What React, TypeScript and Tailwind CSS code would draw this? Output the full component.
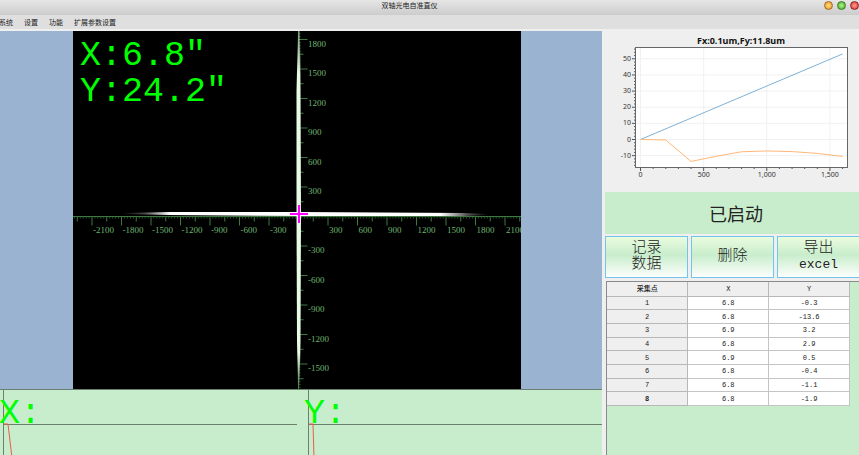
import React from "react";

const MENU = ["系统", "设置", "功能", "扩展参数设置"];

const ROWS: [number, string, string][] = [
  [1, "6.8", "-0.3"],
  [2, "6.8", "-13.6"],
  [3, "6.9", "3.2"],
  [4, "6.8", "2.9"],
  [5, "6.9", "0.5"],
  [6, "6.8", "-0.4"],
  [7, "6.8", "-1.1"],
  [8, "6.8", "-1.9"],
];

const range = (from: number, to: number) =>
  Array.from({ length: to - from + 1 }, (_, i) => from + i);

const READOUT = "font-['Liberation_Mono',monospace] text-[35px] leading-[36px] text-[#00ff00]";

/* Scope geometry: one label step is 300 arc seconds. */
const CX = 225.5;
const CY = 185.5;
const STEP = 29.5;

function tickLength(i: number) {
  if (i % 10 === 0) return 9;
  if (i % 5 === 0) return 5;
  return 2;
}

function Scope() {
  return (
    <svg width="448" height="358" className="block bg-black" role="img" aria-label="光斑图像">
      <defs>
        <linearGradient id="beamH" gradientUnits="userSpaceOnUse" x1="50" y1="0" x2="415" y2="0">
          <stop offset="0" stopColor="#fff" stopOpacity="0" />
          <stop offset="0.06" stopColor="#fff" stopOpacity="0.3" />
          <stop offset="0.13" stopColor="#fff" />
          <stop offset="0.87" stopColor="#fff" />
          <stop offset="0.94" stopColor="#fff" stopOpacity="0.35" />
          <stop offset="1" stopColor="#fff" stopOpacity="0" />
        </linearGradient>
        <linearGradient id="beamV" gradientUnits="userSpaceOnUse" x1="0" y1="0" x2="0" y2="358">
          <stop offset="0" stopColor="#e9fbe6" stopOpacity="0.3" />
          <stop offset="0.12" stopColor="#e9fbe6" />
          <stop offset="0.9" stopColor="#e9fbe6" />
          <stop offset="0.97" stopColor="#e9fbe6" stopOpacity="0.3" />
          <stop offset="1" stopColor="#e9fbe6" stopOpacity="0" />
        </linearGradient>
      </defs>

      <g stroke="#3c7a40" strokeWidth="1">
        <line x1="0" y1={CY} x2="448" y2={CY} />
        <line x1={CX} y1="0" x2={CX} y2="358" />
        {range(-76, 75).map((i) => (
          <line
            key={`h${i}`}
            x1={CX + (i * STEP) / 10}
            x2={CX + (i * STEP) / 10}
            y1={CY}
            y2={CY + tickLength(i)}
            opacity={i % 5 === 0 ? 1 : 0.7}
          />
        ))}
        {range(-62, 58).map((i) => (
          <line
            key={`v${i}`}
            x1={CX}
            x2={CX + tickLength(i)}
            y1={CY + (i * STEP) / 10}
            y2={CY + (i * STEP) / 10}
            opacity={i % 5 === 0 ? 1 : 0.7}
          />
        ))}
      </g>

      <polygon points="223.5,60 225,0 227,0 227.5,60 228,185 227.5,310 226.5,358 225,358 224,310 223.5,185" fill="url(#beamV)" />
      <polygon points="50,182 95,181 226,181 390,182 415,183 415,184 390,185 226,185 95,184 50,183" fill="url(#beamH)" />

      <g className="font-['Liberation_Serif',serif] text-[9px]" fill="#6fb573">
        {[-7, -6, -5, -4, -3, -2, -1, 1, 2, 3, 4, 5, 6, 7].map((n) => (
          <text key={n} x={CX + n * STEP + 1} y="202">
            {n * 300}
          </text>
        ))}
        {[6, 5, 4, 3, 2, 1, -1, -2, -3, -4, -5].map((n) => (
          <text key={n} x="235" y={CY - n * STEP + 7}>
            {n * 300}
          </text>
        ))}
      </g>

      <path d="M217 183H235M226 174V192" stroke="#ff00ff" strokeWidth="2" />
    </svg>
  );
}

/* Plot coordinates: value to pixel inside the chart area. */
const px = (v: number) => 35.5 + v * 0.1263;
const py = (v: number) => 108.5 - v * 1.614;

const FX: [number, number][] = [[0, 0], [1600, 53]];
const FY: [number, number][] = [
  [0, 0], [200, -0.3], [400, -13.6], [600, -10.4], [800, -7.6],
  [1000, -7.1], [1200, -7.5], [1400, -8.6], [1600, -10.5],
];
const toPoints = (s: [number, number][]) => s.map(([x, y]) => `${px(x)},${py(y)}`).join(" ");

function Chart() {
  return (
    <svg width="254" height="161" className="block font-['Noto_Sans','Open_Sans',sans-serif]" role="img" aria-label="Fx Fy">
      <text x="136" y="13" textAnchor="middle" className="text-[9px] font-bold" fill="#111">
        Fx:0.1um,Fy:11.8um
      </text>
      <rect x="30.5" y="16.5" width="212" height="120" fill="#fff" stroke="#666" />
      <g stroke="#f1f1f1">
        {[0, 500, 1000, 1500].map((v) => (
          <line key={v} x1={px(v)} x2={px(v)} y1="17" y2="136" />
        ))}
        {[-10, 0, 10, 20, 30, 40, 50].map((v) => (
          <line key={v} x1="31" x2="242" y1={py(v)} y2={py(v)} />
        ))}
      </g>
      <g stroke="#555">
        {range(-8, 28).map((i) => (
          <line key={i} x1={i % 5 === 0 ? 27 : 29} x2="30" y1={py(i * 2)} y2={py(i * 2)} />
        ))}
        {range(0, 16).map((i) => (
          <line key={i} y1="137" y2={i % 5 === 0 ? 140 : 138} x1={px(i * 100)} x2={px(i * 100)} />
        ))}
      </g>
      <polyline points={toPoints(FX)} fill="none" stroke="#7fb2d6" />
      <polyline points={toPoints(FY)} fill="none" stroke="#ffb878" />
      <g className="text-[7px]" fill="#333">
        {[-10, 0, 10, 20, 30, 40, 50].map((v) => (
          <text key={v} x="26" y={py(v) + 2} textAnchor="end">
            {v}
          </text>
        ))}
        {[0, 500, 1000, 1500].map((v) => (
          <text key={v} x={px(v)} y="146" textAnchor="middle">
            {v.toLocaleString("en-US")}
          </text>
        ))}
      </g>
    </svg>
  );
}

function Trend({ label, trace }: { label: string; trace: string }) {
  return (
    <div className="relative flex-1">
      <svg className="absolute inset-0 h-full w-full">
        <line x1="3.5" y1="0" x2="3.5" y2="100%" stroke="#6c806e" />
        <line x1="3" y1="34.5" x2="100%" y2="34.5" stroke="#6c806e" />
      </svg>
      <div className={`${READOUT} relative -ml-px pt-[6px]`}>{label}</div>
      <svg className="absolute inset-0 h-full w-full">
        <polyline points={trace} fill="none" stroke="#ee5a4a" />
      </svg>
    </div>
  );
}

function ActionButton({ children }: { children: React.ReactNode }) {
  return (
    <button
      type="button"
      className="flex h-[42px] flex-col items-center justify-center border border-[#72c4ea] bg-linear-to-b from-[#ecfddf] via-[#c8edcc] via-45% to-white bg-origin-border font-['Liberation_Mono','Noto_Sans_CJK_SC',monospace] text-[15px] leading-4 font-light text-[#222]"
    >
      {children}
    </button>
  );
}

function Light({ label, className }: { label: string; className: string }) {
  return (
    <button type="button" aria-label={label} className={`size-[9px] rounded-full border ${className}`} />
  );
}

export default function App() {
  return (
    <div className="flex h-screen flex-col overflow-hidden bg-[#efefef] font-['Noto_Sans_CJK_SC',sans-serif] text-[#222]">
      <header className="grid h-[15px] shrink-0 grid-cols-[1fr_auto_1fr] bg-linear-to-b from-[#e6e6e6] to-[#cccccc]">
        <span />
        <h1 className="pr-10 text-[7px] leading-[10px]">双轴光电自准直仪</h1>
        <div className="flex justify-end gap-1 pt-px">
          <Light label="最小化" className="border-[#a06a20] bg-radial from-[#ffe27a] to-[#e8891c]" />
          <Light label="最大化" className="border-[#3c7a20] bg-radial from-[#b4f58a] to-[#35a61c]" />
          <Light label="关闭" className="border-[#8c2222] bg-radial from-[#ff9a90] to-[#d42424]" />
        </div>
      </header>

      <nav className="-ml-px flex h-[14px] shrink-0 items-center gap-[11px] bg-[#dfdfdf] text-[7px] leading-[14px]">
        {MENU.map((m) => (
          <button key={m} type="button">
            {m}
          </button>
        ))}
      </nav>

      <div className="flex min-h-0 flex-1">
        <main className="flex min-w-0 flex-1 flex-col pt-[2px]">
          <div className="grid grid-cols-[73fr_448px_81fr] bg-[#9ab3d0]">
            <div className="relative col-start-2">
              <Scope />
              <div className={`${READOUT} absolute top-[7px] left-[7px]`}>
                <div>X:6.8"</div>
                <div>Y:24.2"</div>
              </div>
            </div>
          </div>
          <section className="flex flex-1 gap-2 overflow-hidden border-t border-[#6c806e] bg-[#c8edcc]">
            <Trend label="X:" trace="4,34 8,34 12,68" />
            <Trend label="Y:" trace="4,34 8,34 9,68" />
          </section>
        </main>

        <aside className="flex w-[257px] shrink-0 flex-col overflow-hidden pl-[3px]">
          <div className="pt-[2px]">
            <Chart />
          </div>
          <div className="flex h-[42px] shrink-0 items-center justify-center bg-[#c8edcc] pl-2 text-[18px] leading-6">
            已启动
          </div>
          <div className="mt-[2px] -mr-px grid grid-cols-3 gap-[3px]">
            <ActionButton>
              <span>记录</span>
              <span>数据</span>
            </ActionButton>
            <ActionButton>删除</ActionButton>
            <ActionButton>
              <span>导出</span>
              <span className="text-[13px]">excel</span>
            </ActionButton>
          </div>
          <div className="mt-[3px] ml-px flex-1 border-t border-l border-[#8a8a8a] bg-[#c8edcc]">
            <table className="h-[124px] w-[243px] table-fixed border-collapse bg-white text-center font-['Liberation_Mono','Noto_Sans_CJK_SC',monospace] text-[7px] leading-[10px]">
              <thead>
                <tr className="h-[14px] bg-[#efefef]">
                  {["采集点", "X", "Y"].map((h) => (
                    <th key={h} scope="col" className="border-r border-b border-[#b8b8b8] p-0 font-medium">
                      {h}
                    </th>
                  ))}
                </tr>
              </thead>
              <tbody>
                {ROWS.map(([n, x, y]) => (
                  <tr key={n}>
                    <th
                      scope="row"
                      className={`border-r border-b border-[#b8b8b8] bg-[#efefef] p-0 ${n === 8 ? "font-bold" : "font-normal"}`}
                    >
                      {n}
                    </th>
                    <td className="border-r border-b border-[#c4c4c4] p-0">{x}</td>
                    <td className="border-r border-b border-[#c4c4c4] p-0">{y}</td>
                  </tr>
                ))}
              </tbody>
            </table>
          </div>
        </aside>
      </div>
    </div>
  );
}
